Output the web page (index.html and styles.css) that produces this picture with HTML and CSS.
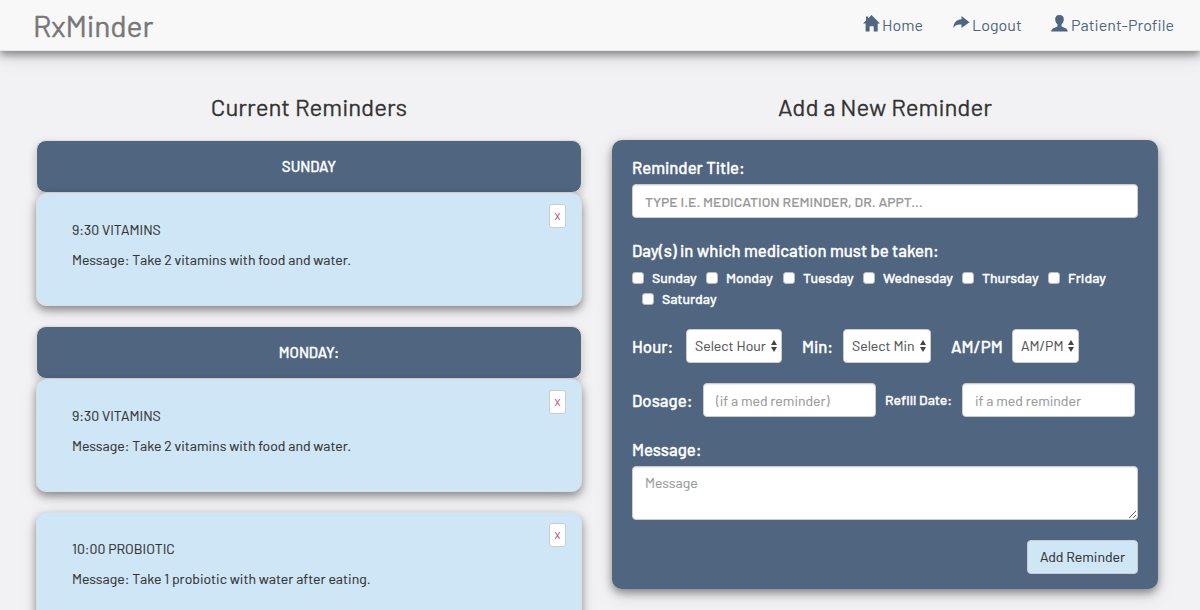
FILE: index.html
```html
<!DOCTYPE html>
<html lang="en">
<head>
<meta charset="utf-8">
<title>RxMinder</title>
<link rel="stylesheet" href="styles.css">
</head>
<body>
<nav class="navbar">
  <a class="brand">RxMinder</a>
  <div class="links">
    <a class="link home"><svg width="17" height="17" viewBox="0 0 17 17"><path d="M8.500 0 17 8.600h-2.300V16.500h-4v-5.300H6.600V16.500H2.600V8.600H0L3 5.600V1.500h2v2z"/></svg><span>Home</span></a>
    <a class="link logout"><svg width="17" height="14" viewBox="0 0 17 14"><path d="M8.500 1 16.500 7.200 8.500 13V9.600C4.500 9.200 2 10.300 0.300 13 0.500 8 3.500 4.500 8.500 4.300z"/></svg><span>Logout</span></a>
    <a class="link profile"><svg width="17" height="17" viewBox="0 0 17 17"><path d="M8.500 0C11.500 0 13 1.800 12.800 4.500 12.700 6.800 11.700 8.300 10.500 9.600V11.300C11.500 12.600 16.800 13 16.800 16.500H.2C.2 13 5.500 12.600 6.500 11.300V9.600C5.300 8.300 4.300 6.800 4.200 4.500 4 1.800 5.500 0 8.500 0z"/></svg><span>Patient-Profile</span></a>
  </div>
</nav>
<main class="columns">
  <section class="column">
    <h2 class="heading current">Current Reminders</h2>
    <div class="day"><span class="sunday">SUNDAY</span></div>
    <article class="card"><button class="remove">X</button><p class="name">9:30 VITAMINS</p><p class="note">Message: Take 2 vitamins with food and water.</p></article>
    <div class="day"><span class="monday">MONDAY:</span></div>
    <article class="card"><button class="remove">X</button><p class="name">9:30 VITAMINS</p><p class="note">Message: Take 2 vitamins with food and water.</p></article>
    <article class="card last"><button class="remove">X</button><p class="name">10:00 PROBIOTIC</p><p class="note">Message: Take 1 probiotic with water after eating.</p></article>
  </section>
  <section class="column">
    <h2 class="heading new">Add a New Reminder</h2>
    <form class="form">
      <label class="label title-label">Reminder Title:</label>
      <input class="control title-input" placeholder="TYPE I.E. MEDICATION REMINDER, DR. APPT...">
      <label class="label days-label">Day(s) in which medication must be taken:</label>
      <div class="days">
        <label class="check c1"><i class="box"></i>Sunday</label>
        <label class="check c2"><i class="box"></i>Monday</label>
        <label class="check c3"><i class="box"></i>Tuesday</label>
        <label class="check c4"><i class="box"></i>Wednesday</label>
        <label class="check c5"><i class="box"></i>Thursday</label>
        <label class="check c6"><i class="box"></i>Friday</label>
      </div>
      <div class="days second"><label class="check"><i class="box"></i>Saturday</label></div>
      <div class="row time">
        <label class="label hour-label">Hour:</label>
        <div class="select hour"><span>Select Hour</span><svg width="6" height="12" viewBox="0 0 6 12"><path d="M3 0 6 5H0zM0 7h6L3 12z"/></svg></div>
        <label class="label min-label">Min:</label>
        <div class="select min"><span>Select Min</span><svg width="6" height="12" viewBox="0 0 6 12"><path d="M3 0 6 5H0zM0 7h6L3 12z"/></svg></div>
        <label class="label ampm-label">AM/PM</label>
        <div class="select ampm"><span>AM/PM</span><svg width="6" height="12" viewBox="0 0 6 12"><path d="M3 0 6 5H0zM0 7h6L3 12z"/></svg></div>
      </div>
      <div class="row dose">
        <label class="label dosage-label">Dosage:</label>
        <input class="control short" placeholder="(if a med reminder)">
        <label class="refill-label">Refill Date:</label>
        <input class="control short" placeholder="if a med reminder">
      </div>
      <label class="label message-label">Message:</label>
      <textarea class="control message" placeholder="Message"></textarea>
      <button class="submit" type="button">Add Reminder</button>
    </form>
  </section>
</main>
</body>
</html>
```

FILE: styles.css
```css
* { box-sizing: border-box; }
body { margin: 0; height: 610px; display: flex; flex-direction: column; overflow: hidden; background: #f2f2f4; color: #333; font: 14px/20px Barlow, Roboto, sans-serif; -webkit-text-stroke: .15px; }
svg { display: block; flex: none; fill: #4f6580; }
.navbar { flex: none; height: 51px; padding: 0 27px 0 34px; display: flex; justify-content: space-between; background: #f8f8f8; border-bottom: 1px solid #e7e7e7; box-shadow: 0 4px 8px rgba(0,0,0,.4), 0 6px 20px rgba(0,0,0,.1); position: relative; }
.brand { font-size: 30px; line-height: 50px; color: #777; letter-spacing: -.1px; margin-left: -1px; -webkit-text-stroke: .4px; }
.links { display: flex; gap: 30px; color: #4f6580; font-size: 16px; line-height: 50px; letter-spacing: .05px; white-space: nowrap; -webkit-text-stroke: 0; }
.link { display: flex; gap: 2px; }
.link svg { margin-top: 15px; }
.home { width: 60px; }
.logout { width: 68px; }
.profile { width: 122px; gap: 3px; }
.columns { display: flex; gap: 30px; padding: 41px 42px 0 36px; }
.column { width: 546px; flex: none; }
.heading { margin: 0 0 18px; font-size: 24px; line-height: 30px; font-weight: 400; text-align: center; -webkit-text-stroke: .3px; }
.day { height: 53px; border: 1px solid #ddd; border-radius: 10px; background: #4f6580; color: #fff; text-align: center; font-size: 15px; line-height: 50px; font-weight: 500; -webkit-text-stroke: .3px; box-shadow: 0 4px 8px rgba(0,0,0,.2); }
.card { position: relative; height: 113px; margin-bottom: 20px; padding: 26px 35px 0; border: 1px solid #ddd; border-radius: 10px; background: #cfe6f6; box-shadow: 0 4px 8px rgba(0,0,0,.4), 0 6px 20px rgba(0,0,0,.08); }
.last { margin-bottom: 0; }
.card p { margin: 0 0 10px; }
.remove { position: absolute; right: 15px; top: 10px; width: 17px; height: 24px; padding: 0; border: 1px solid #ccc; border-radius: 3px; background: #fff; color: #b8405f; font: 10px/20px Barlow, Roboto, sans-serif; }
.form { height: 449px; padding: 17px 20px 0; border-radius: 10px; background: #4f6580; color: #fff; display: flex; flex-direction: column; box-shadow: 0 4px 8px rgba(0,0,0,.4), 0 6px 20px rgba(0,0,0,.1); }
.label { font-size: 16.8px; line-height: 20px; font-weight: 500; white-space: nowrap; -webkit-text-stroke: .3px; }
.control { display: block; height: 34px; margin: 0; padding: 6px 12px; border: 1px solid #ccc; border-radius: 4px; background: #fff; font: 14px/20px Barlow, Roboto, sans-serif; box-shadow: inset 0 1px 1px rgba(0,0,0,.075); }
.control::placeholder { color: #999; opacity: 1; }
.title-input { margin: 7px 0 22px; }
.title-input::placeholder { font-weight: 500; }
.days { display: flex; margin-top: 8px; height: 20px; white-space: nowrap; font-weight: 500; -webkit-text-stroke: .3px; }
.second { margin-top: 1px; padding-left: 10px; }
.check { display: flex; gap: 8px; flex: none; }
.box { width: 12px; height: 12px; margin-top: 4px; border: 1px solid #bbb; border-radius: 3px; background: #fff; }
.c1 { width: 74px; } .c2 { width: 77px; } .c3 { width: 80px; } .c4 { width: 99px; } .c5 { width: 86px; }
.row { display: flex; align-items: center; height: 34px; }
.time { margin-top: 20px; }
.dose { margin: 20px 0 22px; }
.select { display: flex; align-items: center; justify-content: space-between; height: 34px; padding: 0 4px 0 8px; border: 1px solid #ccc; border-radius: 4px; background: #fff; color: #555; white-space: nowrap; }
.select svg { fill: #444; }
.hour-label { width: 54px; } .hour { width: 96px; margin-right: 20px; }
.min-label { width: 41px; } .min { width: 88px; margin-right: 20px; }
.ampm-label { width: 61px; } .ampm { width: 67px; }
.dosage-label { width: 71px; }
.refill-label { width: 77px; margin-left: 9px; font-weight: 500; white-space: nowrap; -webkit-text-stroke: .3px; }
.short { width: 173px; flex: none; }
.message { height: 54px; margin: 7px 0 20px; resize: vertical; }
.submit { align-self: flex-end; width: 111px; height: 34px; padding: 0; border: 1px solid #ccc; border-radius: 4px; background: #cfe6f6; color: #333; font: 14px/20px Barlow, Roboto, sans-serif; }
```
